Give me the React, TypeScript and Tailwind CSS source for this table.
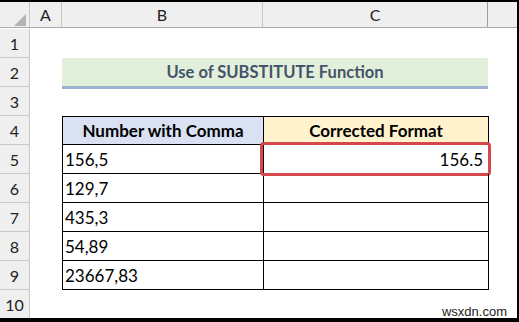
import React from "react";

const rows: { b: string; c: string }[] = [
  { b: "156,5", c: "156.5" },
  { b: "129,7", c: "" },
  { b: "435,3", c: "" },
  { b: "54,89", c: "" },
  { b: "23667,83", c: "" },
];

const font = "font-['Lato','Open_Sans',sans-serif]";

const RowHead = ({ n }: { n: number }) => (
  <div className="flex h-[29px] w-[30px] shrink-0 items-center justify-center border-b border-r border-[#c8c8c8] bg-[#efefef] pt-[1px] text-[16px] text-[#222]">
    {n}
  </div>
);

export default function App() {
  return (
    <div className="h-[322px] w-[519px] overflow-hidden bg-black pb-[4px] pr-[2px] pt-[2px]">
      <div className={`relative h-full w-full overflow-hidden bg-white ${font}`}>
        {/* column headers */}
        <div className="flex h-[26px] border-b border-[#ababab] bg-[#efefef] text-[16px] text-[#222]">
          <div className="relative w-[30px] shrink-0 border-r border-[#c8c8c8]">
            <div className="absolute bottom-[1px] right-[3px] h-0 w-0 border-b-[12px] border-l-[12px] border-b-[#b4b4b4] border-l-transparent" />
          </div>
          <div className="flex w-[32px] shrink-0 items-center justify-center border-r border-[#c8c8c8]">A</div>
          <div className="flex w-[201px] shrink-0 items-center justify-center border-r border-[#c8c8c8]">B</div>
          <div className="flex w-[225px] shrink-0 items-center justify-center border-r border-[#9e9e9e]">C</div>
          <div className="flex-1" />
        </div>

        <div className="h-[1px]" />

        {/* row 1 */}
        <div className="flex">
          <RowHead n={1} />
        </div>

        {/* row 2: title */}
        <div className="flex h-[29px] items-start">
          <RowHead n={2} />
          <div className="w-[32px] shrink-0" />
          <div className="relative z-10 flex h-[31px] w-[426px] shrink-0 items-center justify-center border-b-[3px] border-[#9db1d3] bg-[#e2efda] pt-[1px] text-[16.5px] font-bold text-[#44546a]">
            Use of SUBSTITUTE Function
          </div>
        </div>

        {/* row 3 */}
        <div className="flex">
          <RowHead n={3} />
        </div>

        {/* row 4: table header */}
        <div className="flex">
          <RowHead n={4} />
          <div className="w-[32px] shrink-0" />
          <div className="flex h-[29px] w-[202px] shrink-0 items-center justify-center border border-black bg-[#d9e1f2] pt-[1px] text-[17px] font-bold text-black">
            Number with Comma
          </div>
          <div className="flex h-[29px] w-[225px] shrink-0 items-center justify-center border-y border-r border-black bg-[#fff2cc] pt-[1px] text-[17px] font-bold text-black">
            Corrected Format
          </div>
        </div>

        {rows.map((r, i) => (
          <div key={i} className="flex">
            <RowHead n={i + 5} />
            <div className="w-[32px] shrink-0" />
            <div className="flex h-[29px] w-[202px] shrink-0 items-center border-x border-b border-black pl-[2px] pt-[2px] text-[17px] text-black">
              {r.b}
            </div>
            <div className="relative flex h-[29px] w-[225px] shrink-0 items-center justify-end border-b border-r border-black pr-[5px] pt-[2px] text-[17px] text-black">
              {r.c}
              {i === 0 && (
                <div className="absolute -left-[4px] -top-[3px] h-[34px] w-[231px] rounded-[4px] border-[3px] border-[#d5464d]" />
              )}
            </div>
          </div>
        ))}

        {/* row 10 */}
        <div className="flex">
          <RowHead n={10} />
        </div>

        <div className="absolute bottom-0 right-[10px] font-['Liberation_Sans',sans-serif] text-[13px] leading-none text-[#222]">
          wsxdn.com
        </div>
      </div>
    </div>
  );
}
